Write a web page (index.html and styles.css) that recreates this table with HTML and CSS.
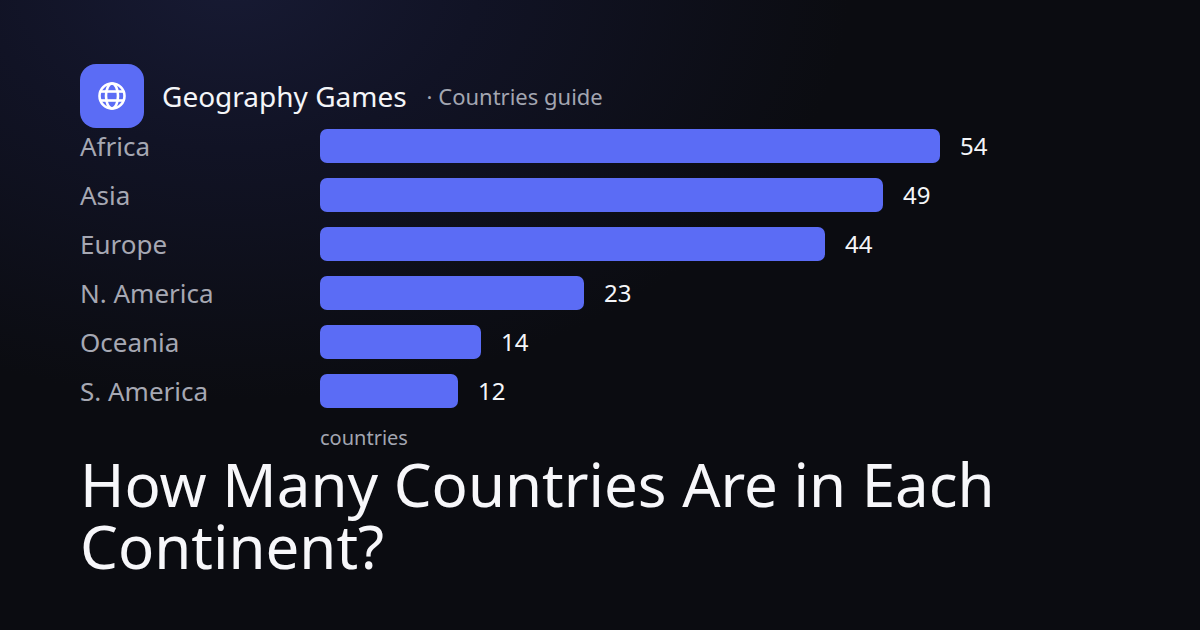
FILE: index.html
```html
<!DOCTYPE html>
<html lang="en">
<head>
<meta charset="utf-8">
<title>How Many Countries Are in Each Continent?</title>
<link rel="stylesheet" href="styles.css">
</head>
<body>
<main class="card">
  <header class="brand">
    <div class="logo">
      <svg viewBox="0 0 32 32" width="32" height="32" fill="none" stroke="#fff" stroke-width="2.6">
        <circle cx="16" cy="16" r="12.5"/>
        <ellipse cx="16" cy="16" rx="6" ry="12.5"/>
        <line x1="4" y1="11.5" x2="28" y2="11.5"/>
        <line x1="4" y1="20.5" x2="28" y2="20.5"/>
      </svg>
    </div>
    <span class="brand-name">Geography Games</span>
    <span class="brand-sub">· Countries guide</span>
  </header>

  <section class="chart">
    <div class="row"><span class="label">Africa</span><div class="track"><div class="bar" style="width:620px"></div><span class="value">54</span></div></div>
    <div class="row"><span class="label">Asia</span><div class="track"><div class="bar" style="width:563px"></div><span class="value">49</span></div></div>
    <div class="row"><span class="label">Europe</span><div class="track"><div class="bar" style="width:505px"></div><span class="value">44</span></div></div>
    <div class="row"><span class="label">N. America</span><div class="track"><div class="bar" style="width:264px"></div><span class="value">23</span></div></div>
    <div class="row"><span class="label">Oceania</span><div class="track"><div class="bar" style="width:161px"></div><span class="value">14</span></div></div>
    <div class="row"><span class="label">S. America</span><div class="track"><div class="bar" style="width:138px"></div><span class="value">12</span></div></div>
    <div class="unit">countries</div>
  </section>

  <h1 class="title">How Many Countries Are in Each Continent?</h1>
</main>
</body>
</html>
```

FILE: styles.css
```css
* { box-sizing: border-box; }

html, body {
  margin: 0;
  padding: 0;
}

body {
  width: 1200px;
  height: 630px;
  overflow: hidden;
  background-color: #0b0c11;
  background-image: radial-gradient(ellipse 620px 420px at 230px -20px, #171a33 0%, #111325 40%, #0b0c11 100%);
  font-family: "Noto Sans", "Open Sans", sans-serif;
  color: #ffffff;
}

.card {
  padding: 64px 80px 0 80px;
  display: flex;
  flex-direction: column;
}

.brand {
  display: flex;
  align-items: center;
  height: 64px;
}

.logo {
  width: 64px;
  height: 64px;
  border-radius: 16px;
  background: #5b6cf5;
  display: flex;
  align-items: center;
  justify-content: center;
  flex-shrink: 0;
}

.brand-name {
  margin-left: 18px;
  font-size: 28px;
  line-height: 36px;
  color: #f4f5f8;
}

.brand-sub {
  margin-left: 20px;
  font-size: 22px;
  line-height: 30px;
  color: #a3a6b1;
}

.chart {
  margin-top: 1px;
  display: flex;
  flex-direction: column;
  gap: 15px;
}

.row {
  display: flex;
  align-items: center;
  height: 34px;
}

.label {
  width: 240px;
  flex-shrink: 0;
  font-size: 26px;
  line-height: 34px;
  color: #a6a8b3;
}

.track {
  display: flex;
  align-items: center;
  gap: 20px;
}

.bar {
  height: 34px;
  border-radius: 7px;
  background: #5b6cf5;
}

.value {
  font-size: 24px;
  line-height: 32px;
  color: #f4f5f8;
}

.unit {
  margin-left: 240px;
  margin-top: 2px;
  font-size: 20px;
  line-height: 26px;
  color: #a3a6b1;
}

.title {
  margin: 2px 0 0 0;
  font-size: 60px;
  font-weight: 400;
  line-height: 62px;
  color: #f7f7fa;
  max-width: 1040px;
}
```
